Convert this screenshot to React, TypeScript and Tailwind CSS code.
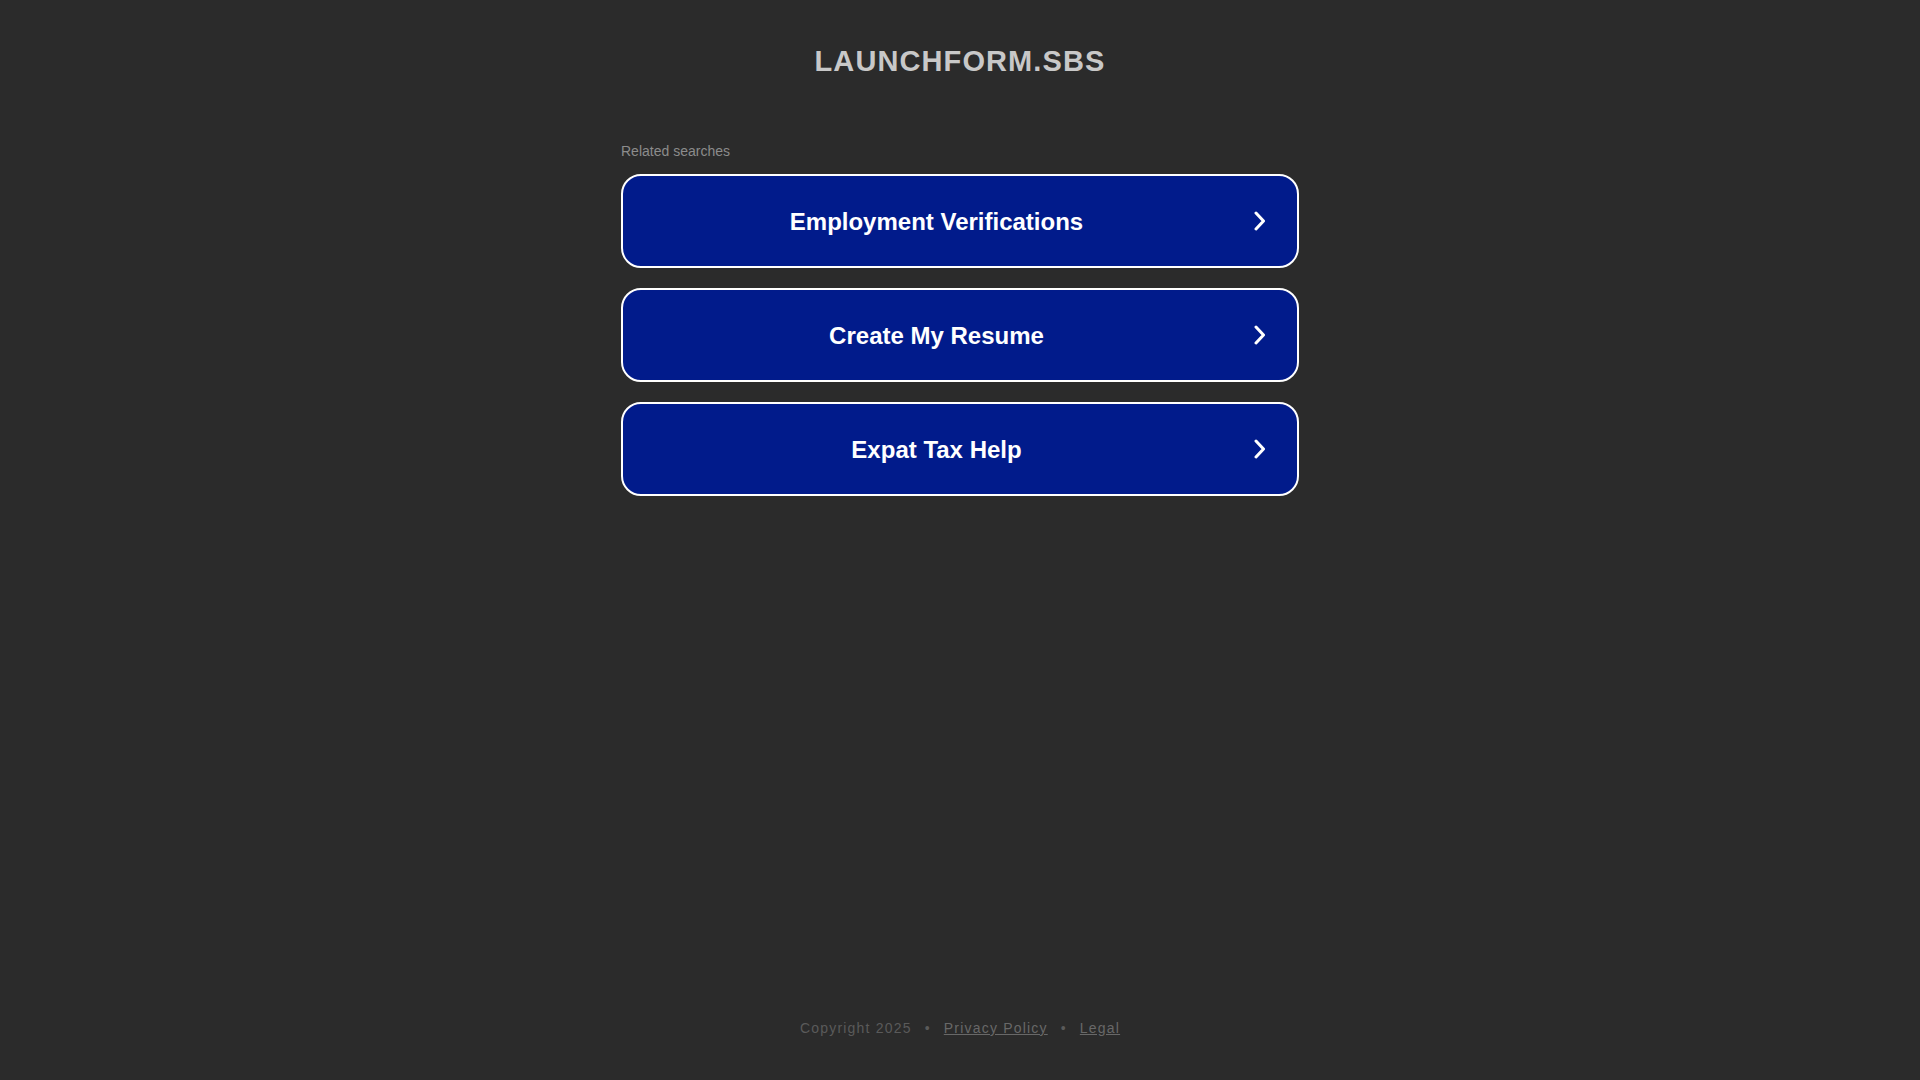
const searches = ["Employment Verifications", "Create My Resume", "Expat Tax Help"];

function Chevron() {
  return (
    <svg width="12" height="20" viewBox="0 0 12 20" className="ml-[39px] shrink-0" fill="none">
      <polyline points="2,2 9.5,10 2,18" stroke="#ffffff" strokeWidth="3" strokeLinecap="round" strokeLinejoin="round" />
    </svg>
  );
}

export default function App() {
  return (
    <div className="min-h-screen bg-[#2b2b2b] flex flex-col items-center font-['Liberation_Sans',Arial,sans-serif]">
      <h1 className="mt-[47px] text-[29px] leading-none font-bold tracking-[1.1px] text-[#c8c8c8]">
        LAUNCHFORM.SBS
      </h1>

      <div className="mt-[68px] w-[678px]">
        <p className="text-[14px] leading-none text-[#8c8c8c]">Related searches</p>
        <div className="mt-[16px] flex flex-col gap-[20px]">
          {searches.map((s) => (
            <a
              key={s}
              href="#"
              className="flex items-center h-[94px] rounded-[20px] border-2 border-white bg-[#011b8b] pl-[35px] pr-[31px]"
            >
              <span className="flex-1 text-center text-[24px] font-bold text-white leading-none pt-[2px]">{s}</span>
              <Chevron />
            </a>
          ))}
        </div>
      </div>

      <footer className="mt-auto pb-[45px] text-[14px] leading-none tracking-[1.2px] text-[#5a5a5a] flex items-center">
        <span>Copyright 2025</span>
        <span className="mx-[13px]">•</span>
        <a href="#" className="underline text-[#686868]">Privacy Policy</a>
        <span className="mx-[13px]">•</span>
        <a href="#" className="underline text-[#686868]">Legal</a>
      </footer>
    </div>
  );
}
